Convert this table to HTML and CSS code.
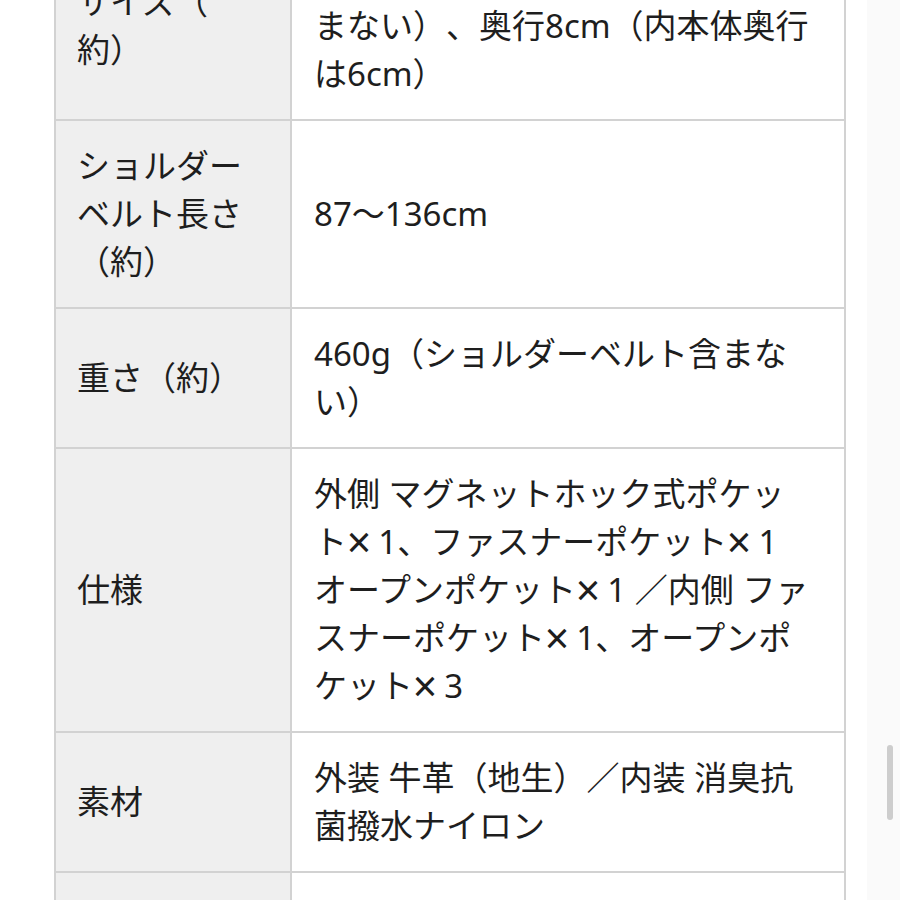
FILE: index.html
```html
<!DOCTYPE html>
<html lang="ja">
<head>
<meta charset="utf-8">
<title>仕様</title>
<link rel="stylesheet" href="styles.css">
</head>
<body>
<div class="page">
  <table class="spec">
    <tbody>
      <tr>
        <th>サイズ（<br>約）</th>
        <td>幅24<span class="x">×</span>高さ18cm（ベルト含<br>まない）、奥行8cm（内本体奥行は6cm）</td>
      </tr>
      <tr>
        <th>ショルダーベルト長さ（約）</th>
        <td>87〜136cm</td>
      </tr>
      <tr>
        <th>重さ（約）</th>
        <td>460g（ショルダーベルト含まない）</td>
      </tr>
      <tr>
        <th>仕様</th>
        <td>外側 マグネットホック式ポケット<span class="x">×</span>1、ファスナーポケット<span class="x">×</span>1 オープンポケット<span class="x">×</span>1 ／内側 ファスナーポケット<span class="x">×</span>1、オープンポケット<span class="x">×</span>3</td>
      </tr>
      <tr>
        <th>素材</th>
        <td>外装 牛革（地生）／内装 消臭抗菌撥水ナイロン</td>
      </tr>
      <tr>
        <th>ショルダー幅（約）</th>
        <td>2.5cm</td>
      </tr>
    </tbody>
  </table>
</div>
<div class="scroll-track"></div>
<div class="scroll-thumb"></div>
</body>
</html>
```

FILE: styles.css
```css
html, body {
  margin: 0;
  padding: 0;
  background: #ffffff;
  overflow: hidden;
  height: 100%;
}

body {
  font-family: "Noto Sans", "Noto Sans CJK JP", sans-serif;
  color: #1e1e1e;
  font-size: 33px;
  line-height: 48px;
}

.page {
  padding-left: 54px;
  margin-top: -69px;
}

.spec {
  border-collapse: separate;
  border-spacing: 0;
  table-layout: fixed;
  width: 792px;
  border-left: 2px solid #d2d2d2;
  border-top: 2px solid #d2d2d2;
  text-spacing-trim: space-all;
}

.spec th,
.spec td {
  box-sizing: border-box;
  vertical-align: middle;
  text-align: left;
  font-weight: normal;
  border-right: 2px solid #d2d2d2;
  border-bottom: 2px solid #d2d2d2;
  text-spacing-trim: space-all;
}

.spec th {
  width: 236px;
  background: #efefef;
  padding: 21px 21px;
}

.spec td {
  background: #ffffff;
  padding: 21px 30px 21px 22px;
}

.x {
  display: inline-block;
  width: 0.45em;
  margin-left: 0.05em;
  margin-right: 0.45em;
  text-align: center;
  transform: scale(1.3);
}

.scroll-track {
  position: fixed;
  top: 0;
  right: 0;
  width: 33px;
  height: 100%;
  background: #fafafa;
}

.scroll-thumb {
  position: fixed;
  left: 887px;
  top: 745px;
  width: 6px;
  height: 75px;
  border-radius: 3px;
  background: #cdcdcd;
}
```
